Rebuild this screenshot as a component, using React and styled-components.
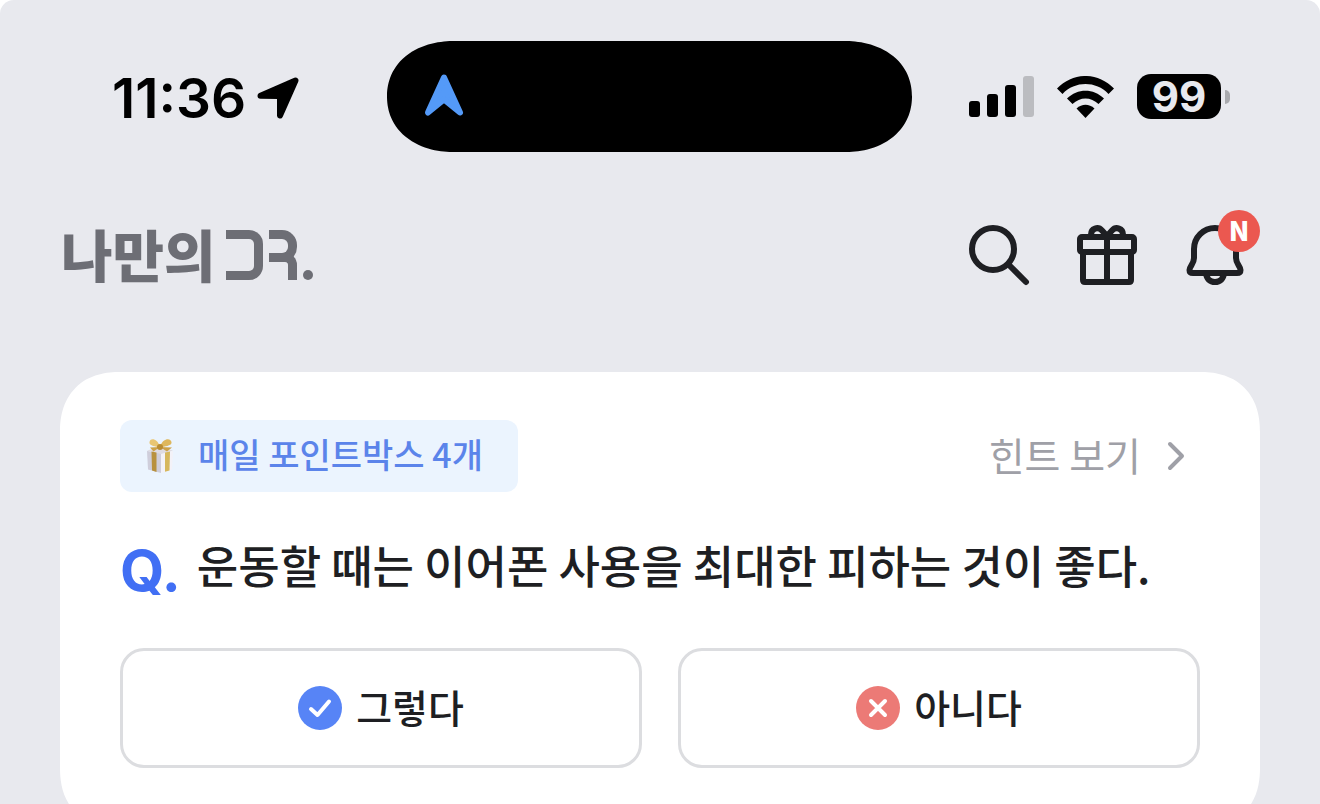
import styled, { createGlobalStyle } from 'styled-components';

const GlobalStyle = createGlobalStyle`
  * {
    box-sizing: border-box;
  }
  body {
    margin: 0;
    background: #ffffff;
    font-family: 'Noto Sans CJK KR', 'Noto Sans', sans-serif;
    color: #1e1f23;
  }
  button {
    margin: 0;
    padding: 0;
    border: 0;
    background: none;
    font: inherit;
    color: inherit;
    cursor: pointer;
  }
  svg {
    display: block;
  }
`;

const Screen = styled.div`
  height: 100vh;
  overflow: hidden;
  background: #e8e9ee;
  border-radius: 14px 14px 0 0;
`;

const StatusBar = styled.div`
  display: grid;
  grid-template-columns: 1fr 525px 1fr;
  align-items: center;
  padding: 41px 60px 0 39px;
  font-family: Inter, sans-serif;
  color: #000000;
`;

const StatusLeft = styled.div`
  display: flex;
  align-items: center;
  gap: 11px;
  padding: 2px 0 0 73px;
`;

const Time = styled.time`
  font-size: 55px;
  font-weight: 600;
  line-height: 60px;
`;

const Island = styled.div`
  display: flex;
  align-items: center;
  height: 111px;
  padding: 0 37px 4px;
  border-radius: 68px / 56px;
  corner-shape: superellipse(1.1);
  background: #000000;
`;

const StatusRight = styled.div`
  display: flex;
  align-items: center;
  justify-content: flex-end;
  gap: 23px;
  padding-right: 30px;
`;

const Signal = styled.div`
  display: flex;
  align-items: flex-end;
  gap: 7px;
  height: 44px;
  padding-bottom: 2px;
`;

const SignalBar = styled.span`
  width: 11px;
  height: ${({ $height }) => $height}px;
  border-radius: 3px;
  background: ${({ $off }) => ($off ? '#bbbcc0' : '#000000')};
`;

const Battery = styled.div`
  display: flex;
  align-items: center;
  gap: 4px;
`;

const BatteryLevel = styled.span`
  width: 84px;
  border-radius: 14px;
  background: #000000;
  color: #e8e9ee;
  font-size: 42px;
  font-weight: 700;
  line-height: 45px;
  text-align: center;
`;

const BatteryTip = styled.span`
  width: 5px;
  height: 14px;
  border-radius: 0 5px 5px 0;
  background: #a9aaae;
`;

const Header = styled.header`
  display: flex;
  align-items: center;
  justify-content: space-between;
  padding: 67px 69px 81px 61px;
`;

const Logo = styled.h1`
  display: flex;
  align-items: center;
  margin: 0;
  color: #6d6e75;
  font-size: 56px;
  font-weight: 900;
  line-height: 68px;
`;

const Label = styled.span`
  padding-bottom: 4px;
`;

const LogoMark = styled.span`
  display: flex;
  align-items: flex-end;
  gap: 6px;
  padding-left: 10px;
`;

const Bracket = styled.span`
  width: 37px;
  height: 50px;
  border: 9px solid;
  border-left: 0;
  border-radius: 0 14px 14px 0;
`;

const Hook = styled.span`
  display: flex;
  flex-direction: column;
  width: 28px;
`;

const HookTop = styled.span`
  height: 32px;
  border: 9px solid;
  border-left: 0;
  border-radius: 0 15px 15px 0;
`;

const HookLeg = styled.span`
  height: 27px;
  margin-top: -9px;
  border: 9px solid;
  border-left: 0;
  border-bottom: 0;
  border-radius: 0 12px 0 0;
`;

const Dot = styled.span`
  width: 10px;
  height: 10px;
  border-radius: 50%;
  background: currentColor;
`;

const Nav = styled.nav`
  display: flex;
  gap: 36px;
`;

const IconButton = styled.button`
  position: relative;
  width: 72px;
  height: 72px;
`;

const Badge = styled.span`
  position: absolute;
  top: -9px;
  right: -9px;
  width: 42px;
  height: 42px;
  border-radius: 50%;
  background: #eb5850;
  color: #ffffff;
  font-size: 27px;
  font-weight: 900;
  line-height: 40px;
  text-align: center;
`;

const Card = styled.main`
  margin: 0 60px;
  padding: 48px 60px 60px;
  border-radius: 60px;
  corner-shape: superellipse(1.2);
  background: #ffffff;
`;

const CardTop = styled.div`
  display: flex;
  align-items: center;
  justify-content: space-between;
`;

const Chip = styled.div`
  display: flex;
  align-items: center;
  gap: 24px;
  height: 72px;
  padding: 0 35px 0 26px;
  border-radius: 12px;
  background: #ebf4fe;
  color: #5b84ea;
  font-size: 34px;
  font-weight: 500;
  line-height: 48px;
`;

const HintLink = styled.a`
  display: flex;
  align-items: center;
  gap: 26px;
  padding-right: 15px;
  color: #9fa0a7;
  font-size: 39px;
  line-height: 60px;
  text-decoration: none;
`;

const Question = styled.h2`
  display: flex;
  align-items: center;
  gap: 16px;
  margin: 33px 0 0;
  font-size: 45px;
  font-weight: 500;
  line-height: 72px;
`;

const QMark = styled.span`
  padding-top: 8px;
  color: #416ff4;
  font-family: Inter, sans-serif;
  font-size: 57px;
  font-weight: 700;
  line-height: 76px;
`;

const Answers = styled.div`
  display: grid;
  grid-template-columns: 1fr 1fr;
  gap: 36px;
  margin-top: 39px;
`;

const AnswerButton = styled.button`
  display: flex;
  align-items: center;
  justify-content: center;
  gap: 14px;
  height: 120px;
  border: 3px solid #dcdde0;
  border-radius: 24px;
  font-size: 39px;
  font-weight: 500;
  line-height: 60px;
`;

const LocationIcon = () => (
  <svg width="42" height="42" viewBox="0 0 42 42" aria-hidden="true">
    <path
      d="M3.5 18.8 38.5 3.5 23 38.5V20.8Q23 19 21 19Z"
      fill="#000"
      stroke="#000"
      strokeWidth="6"
      strokeLinejoin="round"
    />
  </svg>
);

const CompassIcon = () => (
  <svg width="40" height="44" viewBox="0 0 40 44" aria-hidden="true">
    <path
      d="M20 4.5 36 39.5 20 26.5 4 39.5Z"
      fill="#549af8"
      stroke="#549af8"
      strokeWidth="6"
      strokeLinejoin="round"
    />
  </svg>
);

const WifiIcon = () => (
  <svg width="57" height="42" viewBox="0 0 57 42" aria-hidden="true">
    <path d="M0 12.5C16-4.2 41-4.2 57 12.5L51.5 18C39 4.8 18 4.8 5.5 18Z" />
    <path d="M10 22.5C20.5 12 36.5 12 47 22.5L41.5 28C34 20.5 23 20.5 15.5 28Z" />
    <path d="M19.5 32.5C25 27.5 32 27.5 37.5 32.5L28.5 42Z" />
  </svg>
);

const SearchIcon = () => (
  <svg width="72" height="72" viewBox="0 0 72 72" fill="none" stroke="#1e1f23" strokeWidth="6" strokeLinecap="round">
    <circle cx="30" cy="30" r="21" />
    <path d="M45.5 45.5 63 63" />
  </svg>
);

const GiftIcon = () => (
  <svg width="72" height="72" viewBox="0 0 72 72" fill="none" stroke="#1e1f23" strokeWidth="6" strokeLinejoin="round">
    <rect x="9" y="18" width="54" height="15" rx="2" />
    <path d="M12 33V61Q12 63 14 63H58Q60 63 60 61V33M36 18V63" />
    <path d="M20 18V15.5C20 9.5 27 7 31 11.5L36 17 41 11.5C45 7 52 9.5 52 15.5V18" />
  </svg>
);

const BellIcon = () => (
  <svg width="72" height="72" viewBox="0 0 72 72" fill="none" stroke="#1e1f23" strokeWidth="6" strokeLinejoin="round">
    <path d="M15 30V39C15 45 10.5 47 10.5 51Q10.5 54 14 54H58Q61.5 54 61.5 51C61.5 47 57 45 57 39V30A21 21 0 0 0 15 30Z" />
    <path d="M27 54C27.5 60 31 63 36 63S44.5 60 45 54" />
  </svg>
);

const PresentIcon = () => (
  <svg width="28" height="36" viewBox="0 0 28 36" aria-hidden="true">
    <path d="M1 13 15 15V35L2 31.5Z" fill="#cfcedb" />
    <path d="M15 15 27 13 26 31.5 15 35Z" fill="#f3f2f8" />
    <path d="M1 12.5 14 9 27 12.5 15 16Z" fill="#dedbe2" />
    <path d="M5.5 13.5 10.5 14.5V34L6 32.6Z" fill="#b8913f" />
    <path d="M19 14.5 24 13.5 23.5 32.5 19 33.8Z" fill="#d6b75c" />
    <path d="M14 9C11-1 3 0 3.5 5 4 8 9 8 14 10Z" fill="#e9c673" />
    <path d="M14 9C17-1 26 0 25.5 5 25 8 19 8 14 10Z" fill="#deb75c" />
    <path d="M14 9 4 9.5 7.5 13.5ZM14 9 26 9.5 21 13.5Z" fill="#cda248" />
    <circle cx="14" cy="9" r="3" fill="#b98c33" />
  </svg>
);

const ChevronIcon = () => (
  <svg width="18" height="30" viewBox="0 0 18 30" fill="none" stroke="#9fa0a7" strokeWidth="4" strokeLinecap="round" strokeLinejoin="round">
    <path d="M3 3 15 15 3 27" />
  </svg>
);

const YesIcon = () => (
  <svg width="44" height="44" viewBox="0 0 44 44" fill="none" aria-hidden="true">
    <circle cx="22" cy="22" r="22" fill="#5784f6" />
    <path d="M13 23 19.5 29 31 15.5" stroke="#fff" strokeWidth="4" strokeLinecap="round" strokeLinejoin="round" />
  </svg>
);

const NoIcon = () => (
  <svg width="44" height="44" viewBox="0 0 44 44" fill="none" aria-hidden="true">
    <circle cx="22" cy="22" r="22" fill="#ec7a76" />
    <path d="M15 15 29 29M29 15 15 29" stroke="#fff" strokeWidth="4" strokeLinecap="round" />
  </svg>
);

const signalBars = [16, 23, 32, 41];

export default function App() {
  return (
    <Screen>
      <GlobalStyle />
      <StatusBar>
        <StatusLeft>
          <Time>11:36</Time>
          <LocationIcon />
        </StatusLeft>
        <Island>
          <CompassIcon />
        </Island>
        <StatusRight>
          <Signal>
            {signalBars.map((height, index) => (
              <SignalBar key={height} $height={height} $off={index === 3} />
            ))}
          </Signal>
          <WifiIcon />
          <Battery>
            <BatteryLevel>99</BatteryLevel>
            <BatteryTip />
          </Battery>
        </StatusRight>
      </StatusBar>
      <Header>
        <Logo>
          <Label>나만의</Label>
          <LogoMark role="img" aria-label="DR.">
            <Bracket />
            <Hook>
              <HookTop />
              <HookLeg />
            </Hook>
            <Dot />
          </LogoMark>
        </Logo>
        <Nav>
          <IconButton type="button" aria-label="검색">
            <SearchIcon />
          </IconButton>
          <IconButton type="button" aria-label="선물">
            <GiftIcon />
          </IconButton>
          <IconButton type="button" aria-label="알림">
            <BellIcon />
            <Badge>N</Badge>
          </IconButton>
        </Nav>
      </Header>
      <Card>
        <CardTop>
          <Chip>
            <PresentIcon />
            <Label>매일 포인트박스 4개</Label>
          </Chip>
          <HintLink href="#hint">
            <Label>힌트 보기</Label>
            <ChevronIcon />
          </HintLink>
        </CardTop>
        <Question>
          <QMark>Q.</QMark>
          <Label>운동할 때는 이어폰 사용을 최대한 피하는 것이 좋다.</Label>
        </Question>
        <Answers>
          <AnswerButton type="button">
            <YesIcon />
            <Label>그렇다</Label>
          </AnswerButton>
          <AnswerButton type="button">
            <NoIcon />
            <Label>아니다</Label>
          </AnswerButton>
        </Answers>
      </Card>
    </Screen>
  );
}
